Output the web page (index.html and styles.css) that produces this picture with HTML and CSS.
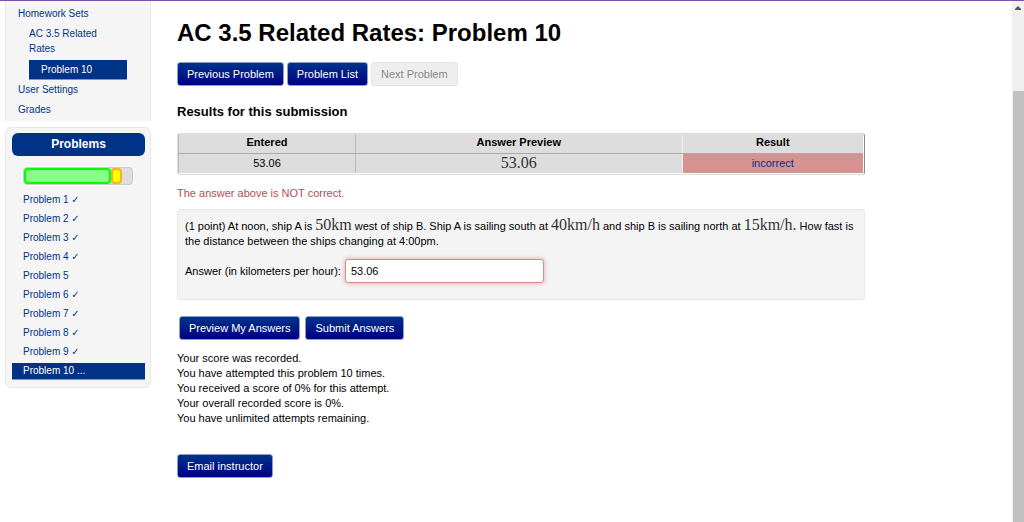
FILE: index.html
```html
<!DOCTYPE html>
<html lang="en">
<head>
<meta charset="utf-8">
<title>AC 3.5 Related Rates: Problem 10</title>
<link rel="stylesheet" href="styles.css">
</head>
<body>
<div class="page">
  <aside class="sidebar">
    <nav class="site-nav" aria-label="Main">
      <a href="#">Homework Sets</a>
      <a href="#" class="level-2">AC 3.5 Related Rates</a>
      <a href="#" class="level-3 current">Problem 10</a>
      <a href="#">User Settings</a>
      <a href="#">Grades</a>
    </nav>
    <section class="problems">
      <h2>Problems</h2>
      <div class="progress"><div class="correct"></div><div class="in-progress"></div></div>
      <ul>
        <li><a href="#">Problem 1 <span class="tick">✓</span></a></li>
        <li><a href="#">Problem 2 <span class="tick">✓</span></a></li>
        <li><a href="#">Problem 3 <span class="tick">✓</span></a></li>
        <li><a href="#">Problem 4 <span class="tick">✓</span></a></li>
        <li><a href="#">Problem 5</a></li>
        <li><a href="#">Problem 6 <span class="tick">✓</span></a></li>
        <li><a href="#">Problem 7 <span class="tick">✓</span></a></li>
        <li><a href="#">Problem 8 <span class="tick">✓</span></a></li>
        <li><a href="#">Problem 9 <span class="tick">✓</span></a></li>
        <li><a href="#" class="current">Problem 10 ...</a></li>
      </ul>
    </section>
  </aside>
  <main class="content">
    <h1>AC 3.5 Related Rates: Problem 10</h1>
    <div class="buttons">
      <button type="button">Previous Problem</button>
      <button type="button">Problem List</button>
      <button type="button" disabled>Next Problem</button>
    </div>
    <h3>Results for this submission</h3>
    <div class="results">
      <table>
        <thead><tr><th class="entered">Entered</th><th>Answer Preview</th><th class="result">Result</th></tr></thead>
        <tbody><tr><td>53.06</td><td><span class="math">53.06</span></td><td class="incorrect"><a href="#">incorrect</a></td></tr></tbody>
      </table>
    </div>
    <p class="warning">The answer above is NOT correct.</p>
    <form>
      <div class="problem">
        <p>(1 point) At noon, ship A is <span class="math">50km</span> west of ship B. Ship A is sailing south at <span class="math">40km/h</span> and ship B is sailing north at <span class="math">15km/h.</span> How fast is the distance between the ships changing at 4:00pm.</p>
        <div class="answer">
          <label for="answer">Answer (in kilometers per hour):</label>
          <input id="answer" type="text" value="53.06">
        </div>
      </div>
      <div class="buttons submit">
        <button type="button">Preview My Answers</button>
        <button type="submit">Submit Answers</button>
      </div>
    </form>
    <p class="score">Your score was recorded.<br>You have attempted this problem 10 times.<br>You received a score of 0% for this attempt.<br>Your overall recorded score is 0%.<br>You have unlimited attempts remaining.</p>
    <button type="button">Email instructor</button>
  </main>
  <div class="scrollbar" aria-hidden="true">
    <svg width="6" height="4" viewBox="0 0 6 4"><path d="M0 4V3L3 0L6 3V4Z" fill="#555"/></svg>
    <div class="thumb"></div>
  </div>
</div>
</body>
</html>
```
FILE: styles.css
```css
* { box-sizing: border-box; }
body {
  margin: 0;
  font: 11px/15px "Liberation Sans", Arial, sans-serif;
  color: #000;
  background: #fff;
}
h1, h2, h3, p, ul { margin: 0; padding: 0; }
a { color: #038; text-decoration: none; }
.page {
  display: flex;
  min-height: 100vh;
  border-top: 1px solid #7b52ab;
}
.sidebar {
  flex: 0 0 146px;
  margin-left: 5px;
  font-size: 10px;
  line-height: 16px;
}
.site-nav {
  display: flex;
  flex-direction: column;
  gap: 4px;
  padding: 5px 23px 3px 12px;
  background: #f5f5f5;
  border: 1px solid #e8e8e8;
  border-width: 0 1px;
}
.site-nav .level-2 { margin-left: 11px; padding-right: 12px; line-height: 15px; }
.site-nav .level-3 { margin: 0 0 -2px 11px; padding: 2px 12px 1px; }
.sidebar .current {
  color: #fff;
  background: #038;
  border-bottom: 1px solid #7f99c3;
}
.problems {
  margin-top: 6px;
  padding: 5px 5px 7px 6px;
  background: #f5f5f5;
  border: 1px solid #e8e8e8;
  border-radius: 6px;
}
.problems h2 {
  padding: 3px 0 4px;
  font-size: 12px;
  text-align: center;
  color: #fff;
  background: #038;
  border-radius: 6px;
}
.progress {
  display: flex;
  height: 18px;
  margin: 11px 12px 7px 11px;
  background: #ddd;
  border: 1px solid #ccc;
  border-radius: 4px;
}
.correct, .in-progress { border: 2px solid #0f0; border-radius: 4px; }
.correct { width: 81%; background: #8f8; }
.in-progress { width: 10%; background: #ff0; border-color: #ffb020; }
.problems ul { list-style: none; }
.problems li a {
  display: block;
  height: 17px;
  margin-bottom: 2px;
  padding-left: 11px;
}
.problems li:last-child a { margin-bottom: 0; }
.tick { font-family: "DejaVu Sans", sans-serif; line-height: 10px; }
.content { flex: 1; min-width: 0; padding: 18px 147px 0 26px; }
h1 { font-size: 24px; line-height: 28px; }
.buttons { display: flex; gap: 3px; margin-top: 15px; }
button {
  height: 24px;
  padding: 0 9px;
  font: inherit;
  color: #fff;
  background: linear-gradient(#038, #008);
  border: 1px solid #8d9dca;
  border-radius: 3px;
}
button:disabled { color: #888; background: #eee; border-color: #e4e4e4; }
h3 { margin: 17px 0 12px; font-size: 13px; line-height: 18px; }
.results {
  border: 1px solid #ddd;
  border-right-color: #888;
  border-radius: 3px;
  padding: 0 1px 1px 0;
}
table { width: 100%; table-layout: fixed; border-collapse: collapse; background: #ddd; }
th, td {
  height: 20px;
  padding: 0;
  text-align: center;
  border-left: 1px solid #bbb;
}
th { height: 19px; padding-bottom: 1px; border-bottom: 1px solid #aaa; }
.entered { width: 177px; }
.result { width: 181px; border-left-color: #eee; }
.incorrect { background: #d69191; border-left-color: #eee; }
.math { font-family: "Liberation Serif", serif; font-size: 16px; line-height: 15px; color: #333; }
.warning { margin: 11px 0 8px; color: #b94a56; }
.problem {
  padding: 7px 2px 7px 7px;
  background: #f4f4f4;
  border: 1px solid #e8e8e8;
  border-radius: 3px;
}
.answer { display: flex; align-items: center; gap: 4px; margin: 10px 0 9px; }
input {
  width: 199px;
  height: 24px;
  padding: 0 5px;
  font: inherit;
  color: #000;
  background: #fff;
  border: 1px solid #d68b8b;
  border-radius: 3px;
  box-shadow: 0 0 5px #e6a0a0;
}
.submit { gap: 5px; margin: 16px 0 0 2px; }
.score { margin: 11px 0 28px; }
.scrollbar {
  display: flex;
  flex: 0 0 12px;
  flex-direction: column;
  align-items: center;
  padding-top: 5px;
  background: #f0f0f0;
}
.thumb { flex: 1; width: 11px; margin-top: 81px; margin-left: 1px; background: #c1c1c1; }
```
